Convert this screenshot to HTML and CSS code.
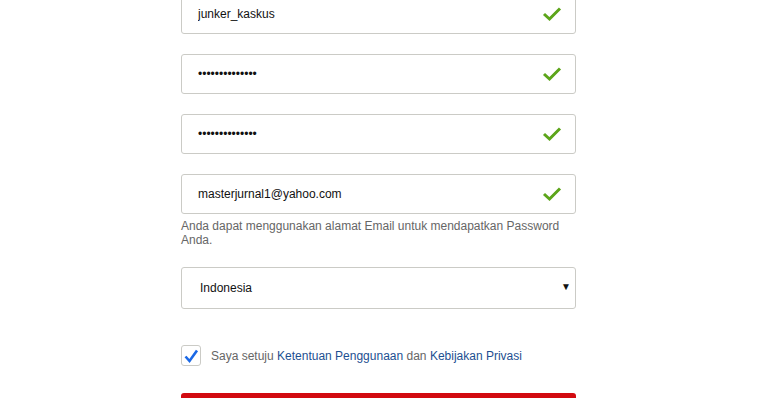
FILE: index.html
```html
<!DOCTYPE html>
<html>
<head>
    <title>Daftar</title>
    <meta charset="UTF-8">
    <meta name="viewport" content="width=device-width, initial-scale=1.0">
    <link rel="stylesheet" href="styles.css">
</head>
<body>

<form class="register">
    <div class="field">
        <input class="text-input" type="text" value="junker_kaskus">
        <svg class="valid" viewBox="0 0 20 16" width="20" height="16"><path d="M2 8 L7.5 13 L18 2.5" fill="none" stroke="#5ca51a" stroke-width="3"/></svg>
    </div>
    <div class="field">
        <input class="text-input" type="password" value="abcdefghijklmn">
        <svg class="valid" viewBox="0 0 20 16" width="20" height="16"><path d="M2 8 L7.5 13 L18 2.5" fill="none" stroke="#5ca51a" stroke-width="3"/></svg>
    </div>
    <div class="field">
        <input class="text-input" type="password" value="abcdefghijklmn">
        <svg class="valid" viewBox="0 0 20 16" width="20" height="16"><path d="M2 8 L7.5 13 L18 2.5" fill="none" stroke="#5ca51a" stroke-width="3"/></svg>
    </div>
    <div class="field field-email">
        <input class="text-input" type="text" value="masterjurnal1@yahoo.com">
        <svg class="valid" viewBox="0 0 20 16" width="20" height="16"><path d="M2 8 L7.5 13 L18 2.5" fill="none" stroke="#5ca51a" stroke-width="3"/></svg>
    </div>
    <p class="hint">Anda dapat menggunakan alamat Email untuk mendapatkan Password Anda.</p>

    <div class="select-wrap">
        <select class="country">
            <option>Indonesia</option>
        </select>
        <span class="arrow">&#9660;</span>
    </div>

    <label class="agree">
        <span class="box">
            <svg viewBox="0 0 16 16" width="16" height="16"><path d="M2.5 8.5 L6.5 13 L14 2.5" fill="none" stroke="#1a68e6" stroke-width="2.6"/></svg>
        </span>
        <span class="agree-text">Saya setuju <a href="#">Ketentuan Penggunaan</a> dan <a href="#">Kebijakan Privasi</a></span>
    </label>

    <div class="submit"></div>
</form>

</body>
</html>
```

FILE: styles.css
```css
body {
    margin: 0;
    background: #fff;
    font-family: "Liberation Sans", Arial, sans-serif;
    font-size: 12px;
    color: #333;
    overflow: hidden;
}

.register {
    width: 395px;
    margin: -6px auto 0;
    transform: translateX(-1px);
}

.field {
    position: relative;
    margin-bottom: 20px;
}

.field-email {
    margin-bottom: 5px;
}

.text-input {
    box-sizing: border-box;
    width: 100%;
    height: 40px;
    border: 1px solid #cbcbc6;
    border-radius: 3px;
    padding: 0 50px 0 16px;
    font-family: "Liberation Sans", Arial, sans-serif;
    font-size: 12px;
    color: #111;
    background: #fff;
    outline: none;
}

.valid {
    position: absolute; /* sits over the input */
    right: 14px;
    top: 12px;
}

.hint {
    margin: 0;
    color: #666;
    line-height: 14px;
}

.select-wrap {
    position: relative;
    margin-top: 20px;
}

.country {
    box-sizing: border-box;
    width: 100%;
    height: 42px;
    border: 1px solid #cbcbc6;
    border-radius: 3px;
    padding: 0 0 0 18px;
    font-family: "Liberation Sans", Arial, sans-serif;
    font-size: 12px;
    color: #111;
    background: #fff;
    appearance: none;
    -webkit-appearance: none;
}

.arrow {
    position: absolute;
    right: 5px;
    top: 14px;
    font-size: 10px;
    color: #111;
    pointer-events: none;
}

.agree {
    display: flex;
    align-items: center;
    gap: 10px;
    margin-top: 36px;
}

.box {
    box-sizing: border-box;
    width: 20px;
    height: 21px;
    border: 1px solid #cbcbc6;
    border-radius: 3px;
    display: flex;
    align-items: center;
    justify-content: center;
}

.agree-text {
    color: #666;
}

.agree-text a {
    color: #1d4f91;
    text-decoration: none;
}

.submit {
    height: 44px;
    margin-top: 27px;
    border-radius: 3px;
    background: #d20a10;
}
```
